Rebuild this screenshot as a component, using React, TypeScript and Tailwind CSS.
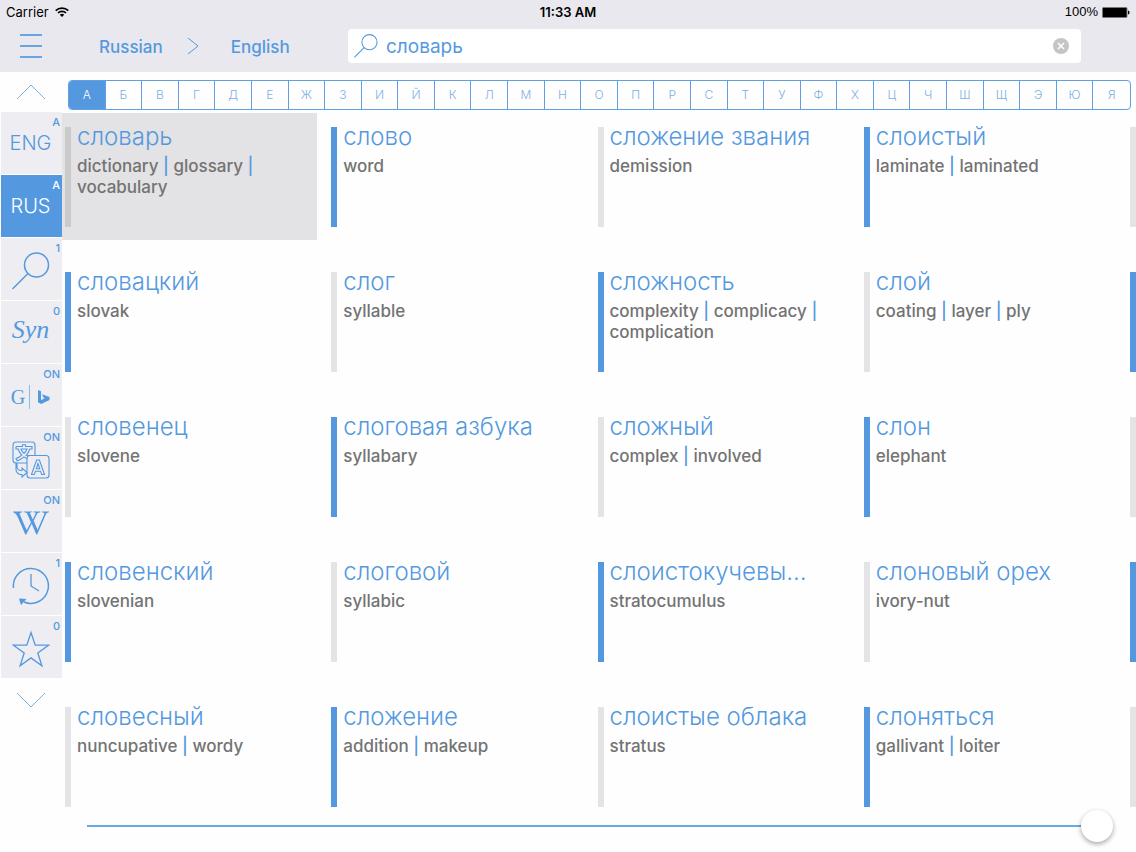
import { useState, type ReactNode } from 'react';
import { FaWikipediaW } from 'react-icons/fa';

interface Entry {
    word: string;
    meanings: string[];
}

interface Tool {
    label: string;
    badge: string;
    icon: ReactNode;
}

const LETTERS = 'АБВГДЕЖЗИЙКЛМНОПРСТУФХЦЧШЩЭЮЯ'.split('');

const ROWS: Entry[][] = [
    [
        { word: 'словарь', meanings: ['dictionary', 'glossary', 'vocabulary'] },
        { word: 'слово', meanings: ['word'] },
        { word: 'сложение звания', meanings: ['demission'] },
        { word: 'слоистый', meanings: ['laminate', 'laminated'] },
    ],
    [
        { word: 'словацкий', meanings: ['slovak'] },
        { word: 'слог', meanings: ['syllable'] },
        { word: 'сложность', meanings: ['complexity', 'complicacy', 'complication'] },
        { word: 'слой', meanings: ['coating', 'layer', 'ply'] },
    ],
    [
        { word: 'словенец', meanings: ['slovene'] },
        { word: 'слоговая азбука', meanings: ['syllabary'] },
        { word: 'сложный', meanings: ['complex', 'involved'] },
        { word: 'слон', meanings: ['elephant'] },
    ],
    [
        { word: 'словенский', meanings: ['slovenian'] },
        { word: 'слоговой', meanings: ['syllabic'] },
        { word: 'слоистокучевы…', meanings: ['stratocumulus'] },
        { word: 'слоновый орех', meanings: ['ivory-nut'] },
    ],
    [
        { word: 'словесный', meanings: ['nuncupative', 'wordy'] },
        { word: 'сложение', meanings: ['addition', 'makeup'] },
        { word: 'слоистые облака', meanings: ['stratus'] },
        { word: 'слоняться', meanings: ['gallivant', 'loiter'] },
    ],
];

function Magnifier({ className, stroke }: { className: string; stroke: number }) {
    return (
        <svg viewBox="0 0 38 38" className={className} fill="none" stroke="currentColor" strokeWidth={stroke}>
            <circle cx="24.5" cy="13" r="12" />
            <path d="M16 21.5 1 36.5" strokeLinecap="round" />
        </svg>
    );
}

function TranslateIcon() {
    return (
        <svg viewBox="0 0 38 38" className="size-[38px]" fill="none" stroke="currentColor" strokeWidth="1.1">
            <path d="M15 22H4a3 3 0 0 1-3-3V4a3 3 0 0 1 3-3h16a3 3 0 0 1 3 3v10" />
            <rect x="15" y="14.5" width="22" height="22.5" rx="3" />
            <path d="M4 5.5h6.5V3.8h3v1.700H20v2.500h-2.200c-.8 2.500-2 4.600-3.600 6.300l4 .2M4 5.500V8h2.200c.8 2.400 2 4.500 3.600 6.200C8.200 15.700 6.200 16.800 4 17.500l1.200 2.300c2.600-.9 4.900-2.200 6.800-3.900l3 2M9 8c.7 1.700 1.700 3.200 3 4.400C13.300 11.200 14.300 9.700 15 8Z" />
            <path d="M19.500 33.500 24.600 19h2.800l5.100 14.500h-2.900l-1.100-3.300h-5l-1.100 3.300ZM24.400 27.700h3.300L26 22.500Z" />
            <path d="M5 22v3.500a4 4 0 0 0 4 4h1v-2.500l5 4.500-5 4.500V33.500H8a6 6 0 0 1-4-6V22" />
        </svg>
    );
}

function HistoryIcon() {
    return (
        <svg viewBox="0 0 38 38" className="size-[38px]" fill="none" stroke="currentColor" strokeWidth="1.500">
            <path d="M1.500 21A17.500 17.500 0 1 1 12 35" />
            <path d="M19 7v12l8 5" strokeWidth="1.300" />
            <path d="M7 31.500 14.500 32 9 38Z" fill="currentColor" stroke="none" />
        </svg>
    );
}

function StarIcon() {
    return (
        <svg viewBox="0 0 38 38" className="size-[38px]" fill="none" stroke="currentColor" strokeWidth="1.300">
            <path d="m19 2.500 4.200 12.700h13.300L25.800 23l4.100 12.700L19 27.900 8.100 35.700 12.200 23 1.500 15.200h13.300Z" />
        </svg>
    );
}

function BingIcon() {
    return (
        <svg viewBox="0 0 12 14" className="h-[14px] w-3" fill="currentColor">
            <path d="M0 0 3 1.200V10.300L6.800 8.100 5.200 7.300 4 4.300 11.500 7V10L3.200 14 0 12.200Z" />
        </svg>
    );
}

function Chevron({ className }: { className: string }) {
    return (
        <svg viewBox="0 0 30 16" className={className} fill="none" stroke="#7bb5dc" strokeWidth="1">
            <path d="m1 15 14-14 14 14" />
        </svg>
    );
}

const TOOLS: Tool[] = [
    { label: 'English', badge: 'A', icon: <span className="font-['Inter'] text-xl font-light">ENG</span> },
    { label: 'Russian', badge: 'A', icon: <span className="font-['Inter'] text-xl font-light">RUS</span> },
    { label: 'Search', badge: '1', icon: <Magnifier className="size-[38px]" stroke={1.5} /> },
    { label: 'Synonyms', badge: '0', icon: <span className="pb-2 font-['Liberation_Serif'] text-[26px] italic">Syn</span> },
    {
        label: 'Google and Bing',
        badge: 'ON',
        icon: (
            <span className="flex items-center gap-1 font-['Liberation_Serif'] text-xl">
                G
                <span className="h-6 w-px bg-[#8dbbe8]" />
                <span className="pl-1"><BingIcon /></span>
            </span>
        ),
    },
    { label: 'Translate', badge: 'ON', icon: <TranslateIcon /> },
    { label: 'Wikipedia', badge: 'ON', icon: <FaWikipediaW className="size-9" /> },
    { label: 'History', badge: '1', icon: <HistoryIcon /> },
    { label: 'Favorites', badge: '0', icon: <StarIcon /> },
];

function StatusBar() {
    return (
        <div className="grid h-6 grid-cols-3 items-center px-[6px] text-[13px] leading-6 text-black">
            <div className="flex items-center gap-[6px] font-['Inter']">
                Carrier
                <svg viewBox="0 0 14 10" className="h-[10px] w-[14px]" fill="none" stroke="currentColor" strokeWidth="1.700">
                    <path d="M.7 3.600a9 9 0 0 1 12.600 0M3 6a5.700 5.700 0 0 1 8 0" />
                    <path d="M4.800 7.700a3.200 3.200 0 0 1 4.400 0L7 10Z" fill="currentColor" stroke="none" />
                </svg>
            </div>
            <div className="text-center font-['Inter'] font-semibold">11:33 AM</div>
            <div className="flex items-center justify-end gap-1">
                100%
                <svg viewBox="0 0 28 11" className="h-[11px] w-7">
                    <rect x=".5" y=".5" width="24.500" height="10" rx="1" fill="#000" stroke="#777" />
                    <path d="M26 3.500c2 .5 2 3.500 0 4Z" fill="#000" />
                </svg>
            </div>
        </div>
    );
}

export default function App() {
    const [query, setQuery] = useState('словарь');
    const [letter, setLetter] = useState('А');
    const [tool, setTool] = useState('Russian');
    const [position, setPosition] = useState(100);

    return (
        <div className="min-h-screen bg-[#fefefe] font-['Liberation_Sans',sans-serif] text-[#5499df]">
            <header className="h-[72px] bg-[#e9e8ee]">
                <StatusBar />
                <div className="flex h-[44px] items-center pr-[55px] pl-5">
                    <button aria-label="Menu" className="flex w-[22px] flex-col gap-[9px]">
                        <span className="h-[2px] w-full bg-[#6aa5e2]" />
                        <span className="h-[2px] w-full bg-[#6aa5e2]" />
                        <span className="h-[2px] w-full bg-[#6aa5e2]" />
                    </button>
                    <div className="flex w-[306px] items-center gap-6 pl-[57px] font-['Inter'] text-[17px] font-medium">
                        <button className="pt-1">Russian</button>
                        <svg viewBox="0 0 12 18" className="h-[18px] w-3" fill="none" stroke="currentColor" strokeWidth="1">
                            <path d="m1 1 10 8-10 8" />
                        </svg>
                        <button className="pt-1 pl-2">English</button>
                    </div>
                    <label className="flex h-[34px] min-w-0 flex-1 items-center gap-2 rounded-sm bg-white pr-3 pl-[6px]">
                        <Magnifier className="size-6" stroke={1.7} />
                        <input
                            aria-label="Search"
                            value={query}
                            onChange={(e) => setQuery(e.target.value)}
                            className="min-w-0 flex-1 bg-transparent pt-[2px] font-['Inter'] text-[19px] outline-none"
                        />
                        <button aria-label="Clear" onClick={() => setQuery('')}>
                            <svg viewBox="0 0 16 16" className="size-4">
                                <circle cx="8" cy="8" r="8" fill="#c5c5c7" />
                                <path d="m5 5 6 6M11 5l-6 6" stroke="#fff" strokeWidth="1.600" />
                            </svg>
                        </button>
                    </label>
                </div>
            </header>

            <div className="flex">
                <aside className="w-[62px] shrink-0 pl-px">
                    <button aria-label="Scroll up" className="flex h-10 w-full items-center justify-center pr-[2px]">
                        <Chevron className="h-4 w-[30px]" />
                    </button>
                    <div className="flex flex-col gap-px">
                        {TOOLS.map((t) => (
                            <button
                                key={t.label}
                                aria-label={t.label}
                                onClick={() => setTool(t.label)}
                                className={`relative flex h-[62px] w-full items-center justify-center pr-[2px] ${
                                    t.label === tool ? 'bg-[#5499df] text-white' : 'bg-[#ededf2]'
                                } ${t.label === 'English' || t.label === 'Russian' ? '' : 'pt-[3px]'}`}
                            >
                                <span className="absolute top-1 right-[2px] font-['Inter'] text-[11px] leading-3 font-medium">
                                    {t.badge}
                                </span>
                                {t.icon}
                            </button>
                        ))}
                    </div>
                    <button aria-label="Scroll down" className="flex h-11 w-full items-center justify-center pr-[2px]">
                        <Chevron className="h-4 w-[30px] rotate-180" />
                    </button>
                </aside>

                <main className="min-w-0 flex-1">
                    <nav className="pt-2 pr-[5px] pb-[3px] pl-[6px]">
                        <div className="grid h-[30px] grid-cols-29 overflow-hidden rounded border border-[#5f9fe2]">
                            {LETTERS.map((l) => (
                                <button
                                    key={l}
                                    onClick={() => setLetter(l)}
                                    className={`border-r border-[#5f9fe2] font-['Inter'] text-xs font-light last:border-r-0 ${
                                        l === letter ? 'bg-[#5499df] text-white' : 'text-[#7fb0e4]'
                                    }`}
                                >
                                    {l}
                                </button>
                            ))}
                        </div>
                    </nav>

                    <div className="flex flex-col gap-[18px]">
                        {ROWS.map((row, r) => (
                            <div key={r} className="grid grid-cols-[repeat(4,minmax(0,1fr))_9px] gap-x-[11px]">
                                {row.map((entry, c) => {
                                    const selected = r === 0 && c === 0;
                                    const blue = (r + c) % 2 === 1;

                                    return (
                                        <article
                                            key={entry.word}
                                            className={`flex h-[127px] gap-[6px] pt-2 pl-[3px] ${selected ? 'bg-[#e3e2e4]' : ''}`}
                                        >
                                            <div
                                                className={`mt-[6px] h-[100px] w-[6px] shrink-0 ${
                                                    selected ? 'bg-[#cacaca]' : blue ? 'bg-[#5499df]' : 'bg-[#e4e3e5]'
                                                }`}
                                            />
                                            <div className="min-w-0 flex-1 font-['Inter']">
                                                <h2 className="truncate text-2xl leading-8 font-light">{entry.word}</h2>
                                                <p className="pt-[3px] pr-8 text-[17px] leading-[21px] font-medium text-[#737373]">
                                                    {entry.meanings.map((m, i) => (
                                                        <span key={m}>
                                                            {m}
                                                            {i < entry.meanings.length - 1 && <span className="text-[#5499df]"> | </span>}
                                                        </span>
                                                    ))}
                                                </p>
                                            </div>
                                        </article>
                                    );
                                })}
                                {/* Edge of the next column */}
                                <div className="overflow-hidden pt-[14px] pl-[3px]">
                                    <div className={`h-[100px] w-[6px] ${r % 2 === 1 ? 'bg-[#5499df]' : 'bg-[#e4e3e5]'}`} />
                                </div>
                            </div>
                        ))}
                    </div>

                    <div className="-mt-[10px] pr-[23px] pb-2 pl-[25px]">
                        <input
                            type="range"
                            aria-label="Position in list"
                            value={position}
                            onChange={(e) => setPosition(Number(e.target.value))}
                            className="block h-8 w-full appearance-none bg-transparent [&::-webkit-slider-runnable-track]:h-[2px] [&::-webkit-slider-runnable-track]:bg-[#6ba9e4] [&::-webkit-slider-thumb]:-mt-[15px] [&::-webkit-slider-thumb]:size-8 [&::-webkit-slider-thumb]:appearance-none [&::-webkit-slider-thumb]:rounded-full [&::-webkit-slider-thumb]:bg-white [&::-webkit-slider-thumb]:shadow-[0_2px_5px_rgba(0,0,0,0.35)]"
                        />
                    </div>
                </main>
            </div>
        </div>
    );
}
